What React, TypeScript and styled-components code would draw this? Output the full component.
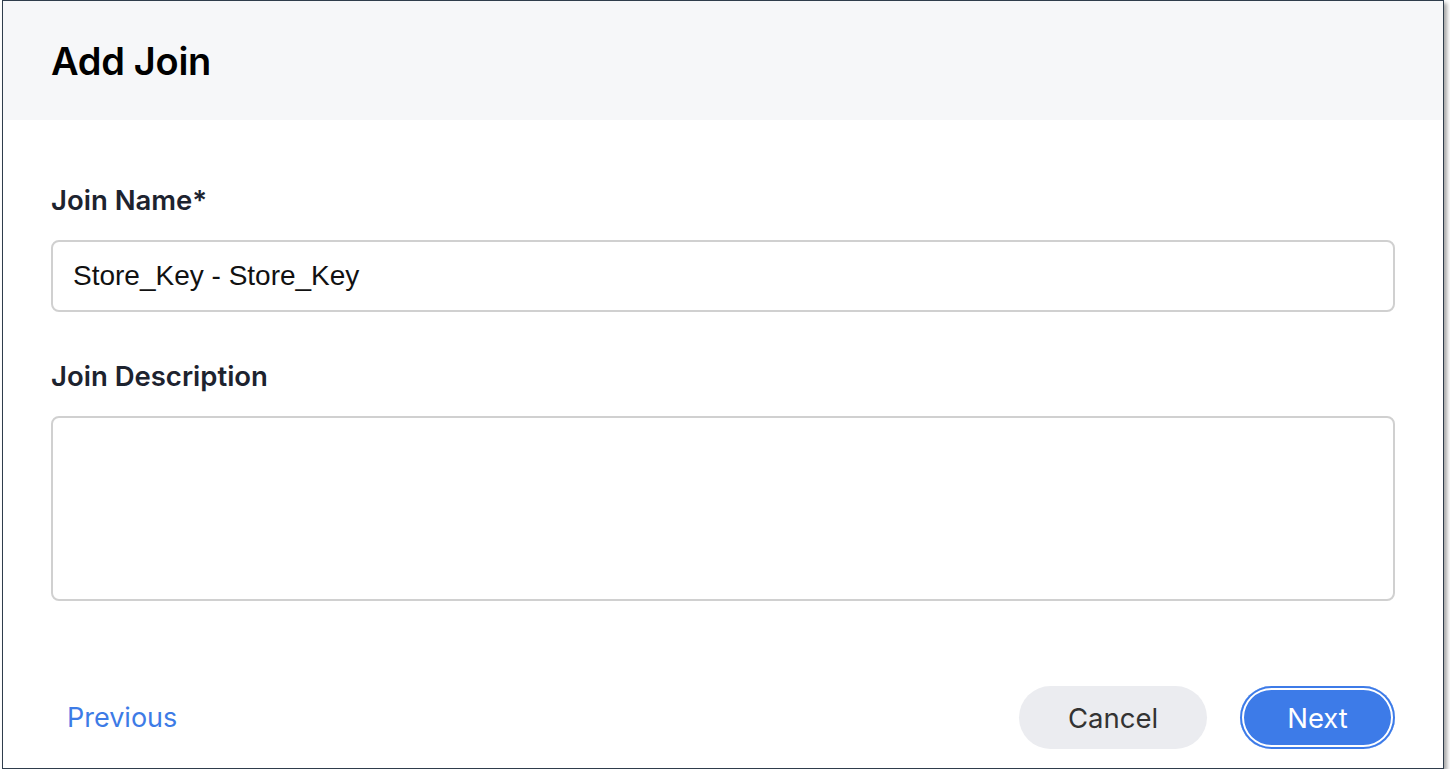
import styled, { createGlobalStyle } from 'styled-components';

const GlobalStyle = createGlobalStyle`
  body {
    margin: 0;
    background: #ffffff;
    font-family: Inter, "Liberation Sans", Arial, sans-serif;
  }
`;

const Dialog = styled.div`
  box-sizing: border-box;
  margin-left: 2px;
  width: 1442px;
  height: 769px;
  border: 1.5px solid #2f3d4c;
  background: #ffffff;
  box-shadow: 3px 3px 4px rgba(0, 0, 0, 0.35);
  display: flex;
  flex-direction: column;
`;

const Header = styled.div`
  height: 119px;
  background: #f6f7f9;
  display: flex;
  align-items: center;
  padding-left: 48px;
`;

const Title = styled.h1`
  margin: 0;
  font-family: Inter, "Liberation Sans", sans-serif;
  font-size: 38px;
  font-weight: 600;
  letter-spacing: -0.3px;
  color: #000000;
`;

const Body = styled.div`
  flex: 1;
  padding: 64px 48px 0 48px;
  display: flex;
  flex-direction: column;
`;

const Label = styled.label`
  display: block;
  font-size: 27.5px;
  line-height: 32px;
  font-weight: 600;
  color: #1d232f;
  margin-bottom: 24px;
`;

const TextInput = styled.input`
  box-sizing: border-box;
  width: 100%;
  height: 72px;
  border: 2px solid #d0d0d0;
  border-radius: 8px;
  padding: 0 20px;
  font-family: "Liberation Sans", Arial, sans-serif;
  font-size: 28px;
  color: #111111;
  outline: none;
  margin-bottom: 48px;
`;

const TextArea = styled.textarea`
  box-sizing: border-box;
  width: 100%;
  height: 185px;
  border: 2px solid #d0d0d0;
  border-radius: 8px;
  padding: 16px 20px;
  font-family: "Liberation Sans", Arial, sans-serif;
  font-size: 26px;
  resize: none;
  outline: none;
`;

const Footer = styled.div`
  display: flex;
  align-items: center;
  justify-content: space-between;
  padding: 0 48px 0 64px;
  margin-top: 84px;
`;

const LinkButton = styled.button`
  background: none;
  border: none;
  padding: 0;
  font-family: Inter, "Liberation Sans", sans-serif;
  font-size: 27px;
  color: #3d7be6;
  cursor: pointer;
`;

const Actions = styled.div`
  display: flex;
  gap: 33px;
`;

const PillButton = styled.button<{ $primary?: boolean }>`
  height: 63px;
  border-radius: 32px;
  border: none;
  font-family: Inter, "Liberation Sans", sans-serif;
  font-size: 27.5px;
  cursor: pointer;
  padding: 0;
  width: ${(p) => (p.$primary ? '155px' : '188px')};
  background: ${(p) => (p.$primary ? '#3d7be8' : '#ebecf0')};
  color: ${(p) => (p.$primary ? '#ffffff' : '#333333')};
  box-shadow: ${(p) =>
    p.$primary ? 'inset 0 0 0 2px #3d7be8, inset 0 0 0 4px #ffffff' : 'none'};
`;

const BottomSpace = styled.div`
  height: 19px;
`;

export default function App() {
  return (
    <>
      <GlobalStyle />
      <Dialog>
        <Header>
          <Title>Add Join</Title>
        </Header>
        <Body>
          <Label>Join Name*</Label>
          <TextInput defaultValue="Store_Key - Store_Key" />
          <Label>Join Description</Label>
          <TextArea />
        </Body>
        <Footer>
          <LinkButton>Previous</LinkButton>
          <Actions>
            <PillButton>Cancel</PillButton>
            <PillButton $primary>Next</PillButton>
          </Actions>
        </Footer>
        <BottomSpace />
      </Dialog>
    </>
  );
}
